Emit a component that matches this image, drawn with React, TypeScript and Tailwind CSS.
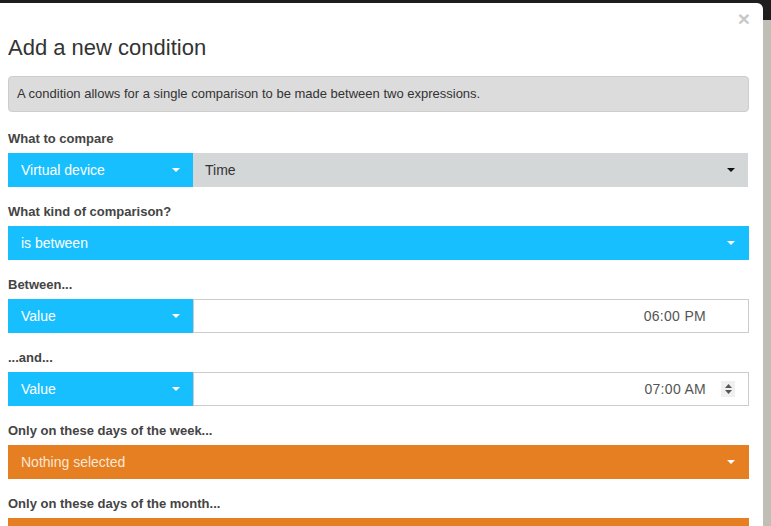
import React from 'react';

const Caret: React.FC<{ dark?: boolean }> = ({ dark }) => (
  <svg width="8" height="4" viewBox="0 0 8 4" className="shrink-0">
    <path d="M0 0 L8 0 L4 4 Z" fill={dark ? '#111' : '#fff'} />
  </svg>
);

const Label: React.FC<{ children: React.ReactNode }> = ({ children }) => (
  <div className="text-[13px] font-bold leading-[19px] text-[#444] mb-[5px]">{children}</div>
);

const BlueSelect: React.FC<{ text: string; wide?: boolean }> = ({ text, wide }) => (
  <div
    className={`${wide ? 'flex-1' : 'w-[185px] shrink-0'} h-[34px] bg-[#17bfff] text-white flex items-center justify-between pl-[13px] ${wide ? 'pr-[14px]' : 'pr-[13px]'}`}
  >
    <span className="text-[14px]">{text}</span>
    <Caret />
  </div>
);

const TimeInput: React.FC<{ value: string; spinner?: boolean }> = ({ value, spinner }) => (
  <div className="flex-1 h-[34px] border border-[#ccc] flex items-center justify-end pr-[13px] text-[14px] text-[#555]">
    <span className="tracking-[0.3px] whitespace-pre">{value}</span>
    <div className={`ml-[15px] w-[14px] h-[16px] flex flex-col items-center justify-center gap-[2px] ${spinner ? 'bg-[#f0f0f0]' : ''}`}>
      {spinner && (
        <>
          <svg width="7" height="4" viewBox="0 0 7 4">
            <path d="M0 4 L7 4 L3.5 0 Z" fill="#555" />
          </svg>
          <svg width="7" height="4" viewBox="0 0 7 4">
            <path d="M0 0 L7 0 L3.5 4 Z" fill="#555" />
          </svg>
        </>
      )}
    </div>
  </div>
);

const OrangeSelect: React.FC<{ text: string }> = ({ text }) => (
  <div className="h-[34px] bg-[#e67f22] flex items-center justify-between pl-[13px] pr-[14px]">
    <span className="text-[14px] text-[#fbe6d3]">{text}</span>
    <Caret />
  </div>
);

export default function App() {
  return (
    <div className="w-[771px] h-[526px] overflow-hidden bg-[#1e1e1e] flex font-['Liberation_Sans',Arial,sans-serif]">
      <div className="w-[763px] mt-[3px] bg-white rounded-tr-[6px] pl-[8px] pr-[14px] pt-[3px]">
        <div className="flex justify-end h-[26px]">
          <span className="text-[21px] leading-[26px] font-bold text-[#c8c8c8] mr-[-1px]">×</span>
        </div>
        <h4 className="mt-[4px] text-[22px] leading-[24px] text-[#333]">Add a new condition</h4>
        <div className="mt-[16px] mb-[17px] border border-[#cdcdcd] bg-[#dcdcdc] rounded-[4px] px-[8px] py-[8px] text-[13px] leading-[18px] text-[#333]">
          A condition allows for a single comparison to be made between two expressions.
        </div>

        <Label>What to compare</Label>
        <div className="flex mb-[15px]">
          <BlueSelect text="Virtual device" />
          <div className="flex-1 mr-[1px] h-[34px] bg-[#d4d7d8] flex items-center justify-between pl-[12px] pr-[13px]">
            <span className="text-[14px] text-[#333]">Time</span>
            <Caret dark />
          </div>
        </div>

        <Label>What kind of comparison?</Label>
        <div className="flex mb-[15px]">
          <BlueSelect text="is between" wide />
        </div>

        <Label>Between...</Label>
        <div className="flex mb-[15px]">
          <BlueSelect text="Value" />
          <TimeInput value="06:00 PM" />
        </div>

        <Label>...and...</Label>
        <div className="flex mb-[15px]">
          <BlueSelect text="Value" />
          <TimeInput value="07:00 AM" spinner />
        </div>

        <Label>Only on these days of the week...</Label>
        <div className="mb-[15px]">
          <OrangeSelect text="Nothing selected" />
        </div>

        <Label>Only on these days of the month...</Label>
        <div className="mb-[15px]">
          <OrangeSelect text="Nothing selected" />
        </div>
      </div>
      <div className="w-[8px] mt-[20px] bg-[#c1beb5]" />
    </div>
  );
}
